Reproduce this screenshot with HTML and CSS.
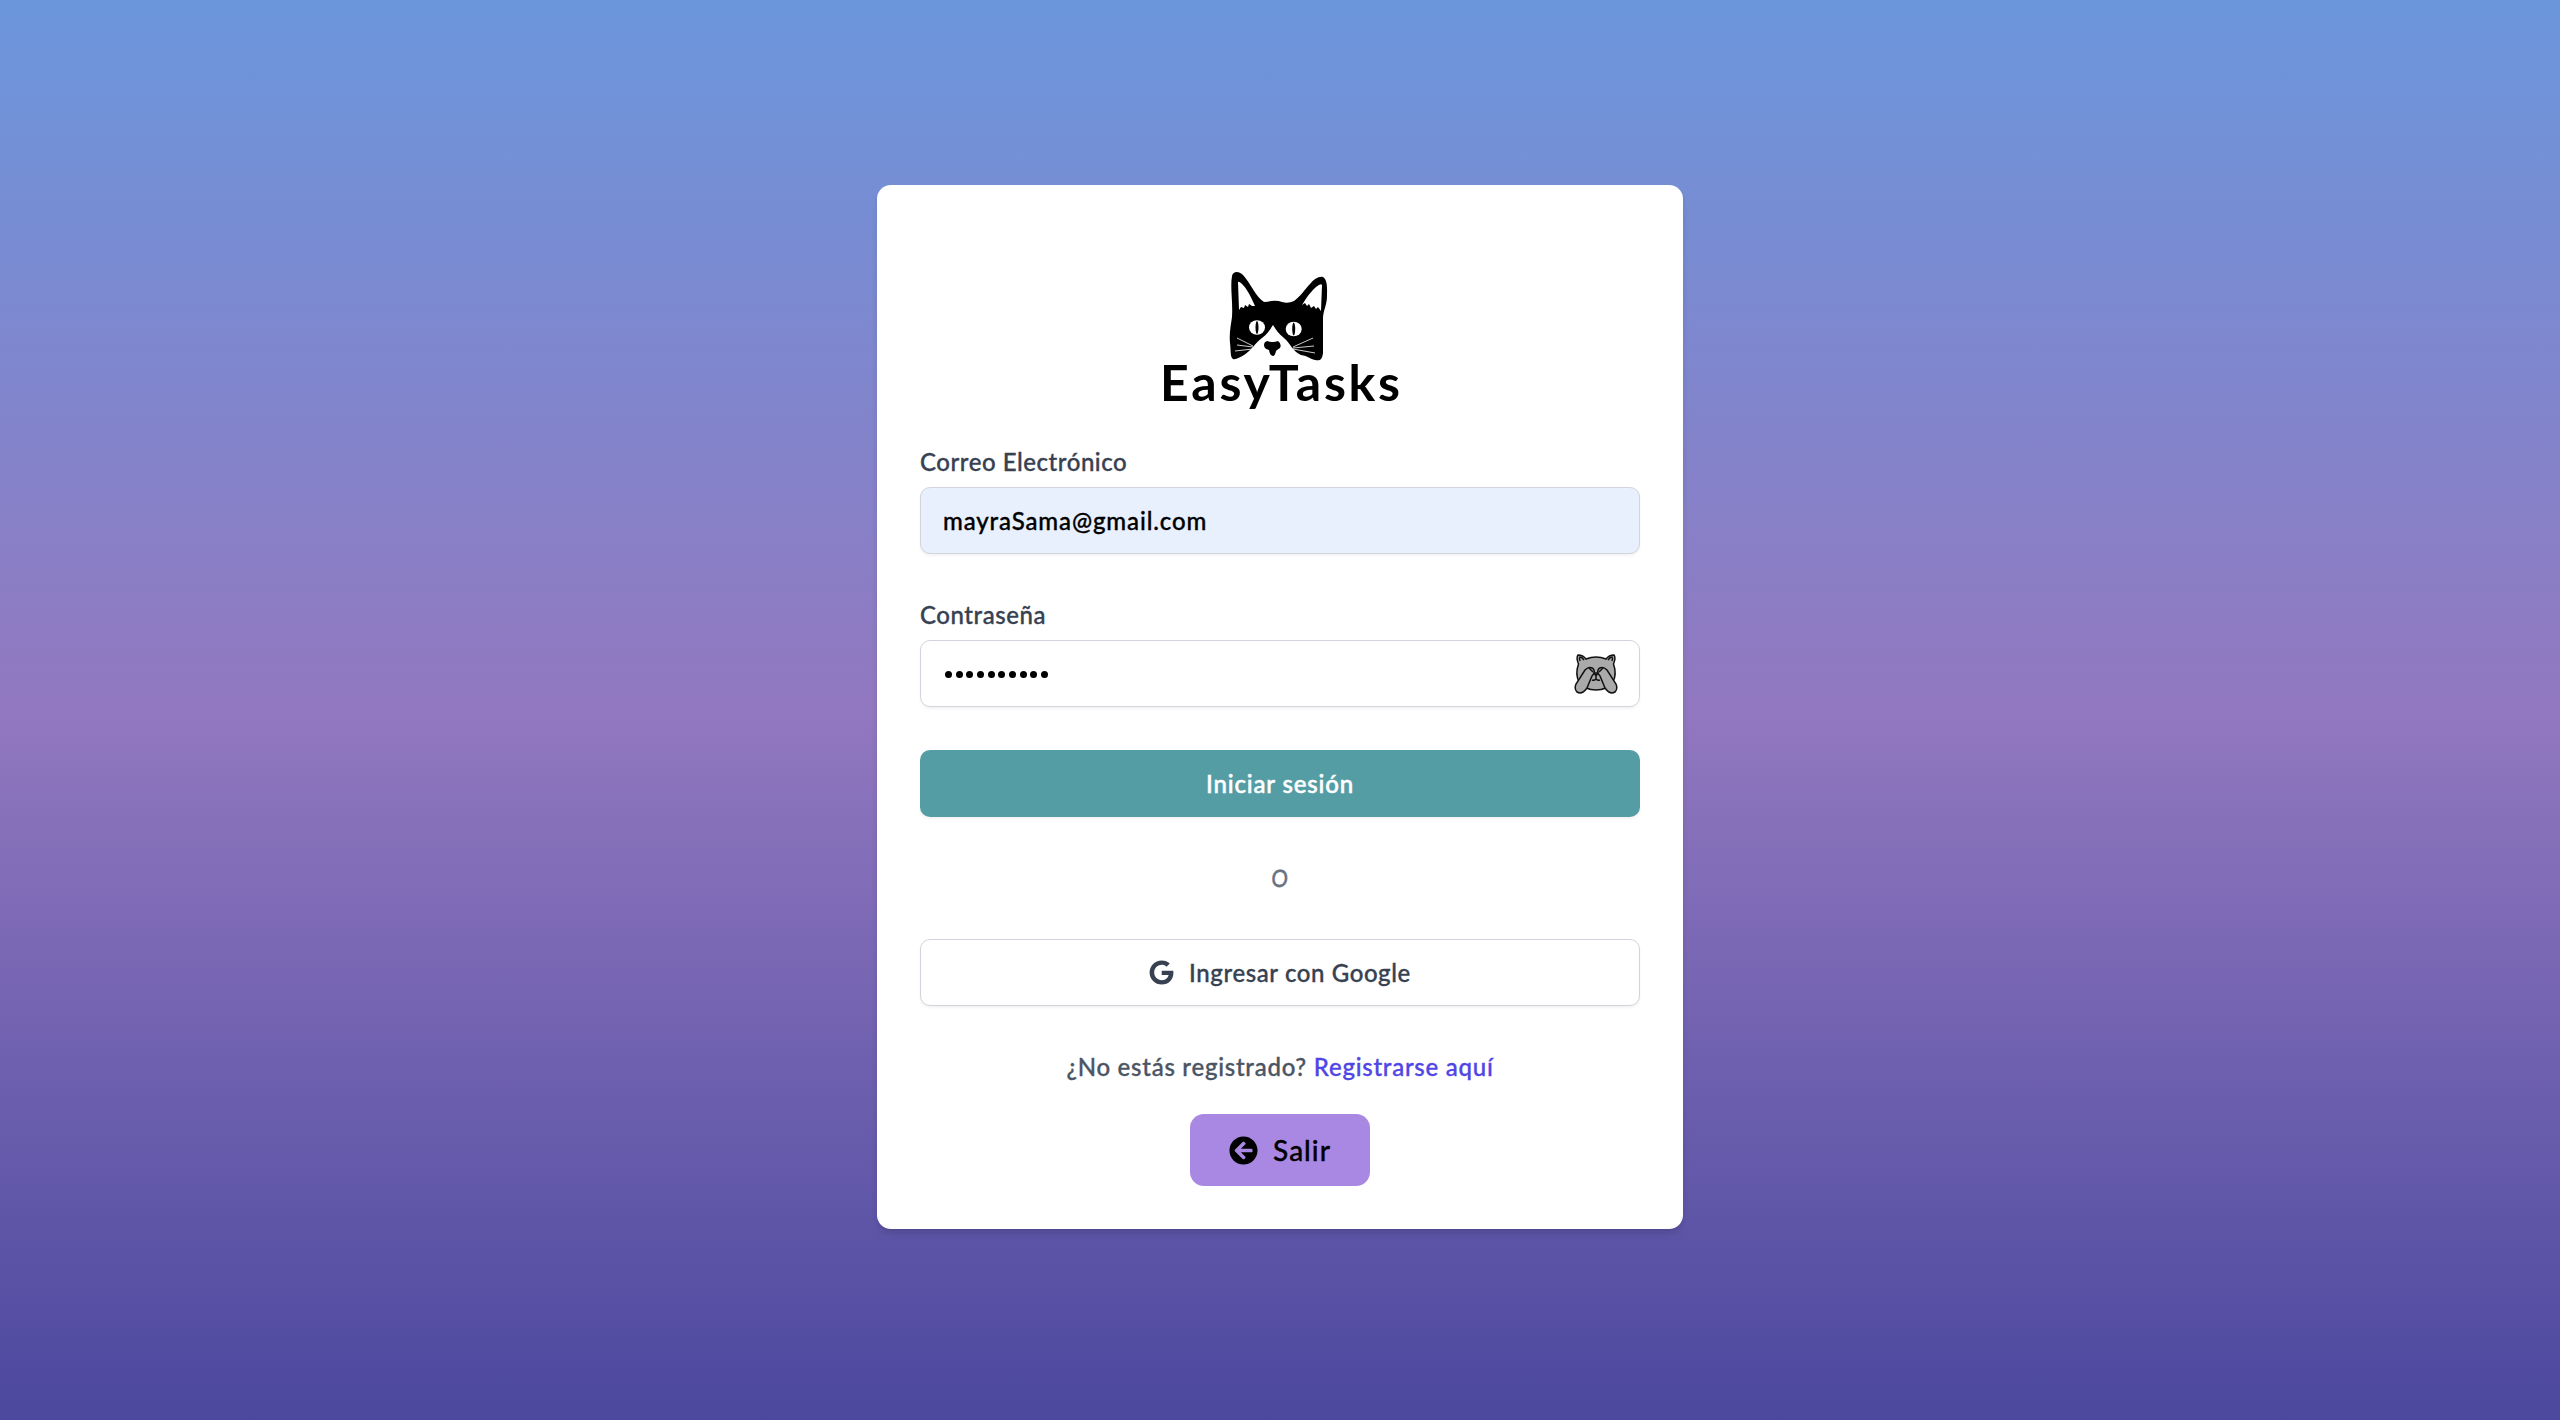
FILE: index.html
```html
<!DOCTYPE html>
<html lang="es">
<head>
<meta charset="utf-8">
<title>EasyTasks</title>
<link rel="stylesheet" href="styles.css">
</head>
<body>
<main class="card">
  <svg class="logo" viewBox="0 0 280 180" role="img" aria-label="EasyTasks">
    <path d="M92 26C93 21 99 21 103 25C111 34 116 47 124 52Q128 52 131 51Q137 50 142 52Q148 54 154 51C160 47 165 39 170 34C174 29 179 26 183 27C188 30 187 40 187 46C187 55 183 61 183 68L183 103C182 110 180 111 175 110C170 109 168 106 161 105C153 102 150 93 144 88C139 84 136 80 133 75C130 80 127 84 122 88C115 93 111 101 104 105C100 107 96 110 93 109C90 107 91 100 90 93C89 83 91 75 92 67C93 52 90 38 92 26Z"/>
    <path class="white" d="M98 32L99 60L101 57L104 58L105 55L108 57L109 54L112 56L115 56C112 49 107 38 101 33Q98 31 98 32Z"/>
    <path class="white" d="M182 35L181 61L178 57L176 59L174 56L171 58L169 54L167 56L165 53L162 55Q169 43 176 37Q181 33 182 35Z"/>
    <ellipse class="white" cx="117" cy="77.500" rx="8" ry="7.300"/><ellipse class="white" cx="153.700" cy="79" rx="8" ry="7.300"/>
    <ellipse cx="117" cy="77.500" rx="1.500" ry="6.500"/><ellipse cx="153.700" cy="79" rx="1.500" ry="6.500"/>
    <path class="whisker" d="M97 88L113 96M97 95L113 97M95 101L113 99M173 88L153 97M174 96L153 98M175 103L153 99"/>
    <path d="M127 91Q133 93 138 91Q142 94 140 98Q138 99 136 101Q135 106 133 106Q130 106 129 100Q124 99 124 95Q124 92 127 91Z"/>
    <text class="logo-text" x="20" y="151" textLength="240" lengthAdjust="spacing">EasyTasks</text>
  </svg>
  <form class="form">
    <label class="field"><span class="label">Correo Electrónico</span>
      <span class="input filled">mayraSama@gmail.com</span></label>
    <label class="field last"><span class="label">Contraseña</span>
      <span class="input"><span class="dots"><i></i><i></i><i></i><i></i><i></i><i></i><i></i><i></i><i></i><i></i></span>
      <svg class="peek" viewBox="0 0 44 44"><path d="M4.500 12Q2 6 4 3Q9 3 12 7Q22 3 32 7Q35 3 40 3Q42 6 39.500 12Q43 22 39 30Q33 38 22 38Q11 38 5 30Q1 22 4.500 12Z"/><path class="line" d="M6 9Q5 6 6 5Q8 5 10 8M38 9Q39 6 38 5Q36 5 34 8M20 21h4l-2 3zM22 24v3M18 28q2 1 4-1q2 2 4 1"/><path d="M11 18Q15 14 19 16.500Q22 20 18 24L13 36Q8 43 3 40Q0 37 2 32Z"/><path d="M33 18Q29 14 25 16.500Q22 20 26 24L31 36Q36 43 41 40Q44 37 42 32Z"/><path class="line" d="M15 16l4 4M29 16l-4 4"/></svg></span></label>
    <button class="btn primary" type="button">Iniciar sesión</button>
    <div class="or"><span>O</span></div>
    <button class="btn google" type="button"><svg class="g" viewBox="0 0 488 512"><path d="M488 261.800C488 403.300 391.100 504 248 504 110.800 504 0 393.200 0 256S110.800 8 248 8c66.800 0 123 24.500 166.300 64.900l-67.500 64.900C258.500 52.600 94.300 116.600 94.300 256c0 86.500 69.100 156.600 153.700 156.600 98.200 0 135-70.400 140.800-106.900H248v-85.300h236.100c2.300 12.700 3.900 24.900 3.900 41.400z"/></svg><span>Ingresar con Google</span></button>
  </form>
  <p class="signup"><span>¿No estás registrado?</span><a>Registrarse aquí</a></p>
  <button class="exit" type="button"><svg class="arrow" viewBox="0 0 512 512"><path d="M256 504C119 504 8 393 8 256S119 8 256 8s248 111 248 248-111 248-248 248zm28.900-143.600L209.400 288H392c13.300 0 24-10.700 24-24v-16c0-13.300-10.700-24-24-24H209.400l75.500-72.400c9.700-9.300 9.900-24.800.4-34.300l-11-10.900c-9.400-9.400-24.600-9.400-33.900 0L107.700 239c-9.400 9.400-9.400 24.600 0 33.900l132.700 132.700c9.400 9.400 24.600 9.400 33.900 0l11-10.900c9.500-9.500 9.300-25-.4-34.300z"/></svg><span>Salir</span></button>
</main>
</body>
</html>
```
FILE: styles.css
```css
* { box-sizing: border-box; }
body { margin: 0; height: 1420px; display: flex; justify-content: center; align-items: flex-start; padding-top: 185px; background: linear-gradient(#6b96dc, #9278c0 50%, #4b489e); font: 500 24px/32px Lato, sans-serif; color: #374151; -webkit-text-stroke: .35px currentColor; }
.card { width: 806px; height: 1044px; padding: 65px 43px 0; background: #fff; border-radius: 14px; box-shadow: 0 7px 10px -2px rgb(0 0 0 / 10%), 0 3px 7px -3px rgb(0 0 0 / 10%); display: flex; flex-direction: column; align-items: center; }
.logo { width: 280px; height: 180px; }
.logo-text { font: 700 50px Lato, sans-serif; -webkit-text-stroke: 0; }
.white { fill: #fff; }
.whisker { stroke: #fff; stroke-width: .8; fill: none; }
.form { width: 720px; display: flex; flex-direction: column; margin-top: 17px; }
.field { display: block; height: 153px; }
.field.last { height: 150px; }
.label { display: block; height: 40px; line-height: 30px; letter-spacing: .54px; }
.input { display: flex; align-items: center; height: 67px; padding: 0 21px 0 22px; border: 1px solid #d1d5db; border-radius: 10px; box-shadow: 0 2px 3px rgb(0 0 0 / 5%); color: #000; }
.filled { background: #e8effd; letter-spacing: .88px; }
.dots { display: flex; gap: 3.660px; padding: 2px 0 0 2px; flex: 1; }
.dots i { width: 7px; height: 7px; border-radius: 50%; background: #000; }
.peek { width: 44px; height: 44px; fill: #aaa; stroke: #111; stroke-width: 1.500; }
.line { fill: none; }
.btn { height: 67px; width: 720px; border-radius: 10px; font: inherit; display: flex; align-items: center; justify-content: center; border: 0; }
.primary { background: #559da5; color: #fff; box-shadow: 0 2px 3px rgb(0 0 0 / 5%); letter-spacing: .85px; -webkit-text-stroke: .5px #fff; }
.or { height: 122px; line-height: 122px; text-align: center; color: #6b7280; }
.or span { display: inline-block; transform: skewX(-3deg) scaleX(.86); }
.google { border: 1px solid #d1d5db; background: #fff; color: #374151; box-shadow: 0 2px 3px rgb(0 0 0 / 5%); gap: 15px; letter-spacing: .6px; }
.g { width: 25px; height: 25px; fill: #374151; }
.signup { margin: 45px 0 0; display: flex; gap: 7px; color: #4b5563; letter-spacing: .74px; }
.signup a { color: #4f46e5; }
.exit { width: 180px; height: 72px; margin-top: 31px; border: 0; border-radius: 14px; background: #a988e4; font: 500 28px Lato, sans-serif; display: flex; justify-content: center; align-items: center; gap: 15px; color: #000; letter-spacing: 1px; }
.arrow { width: 29px; height: 29px; }
```
